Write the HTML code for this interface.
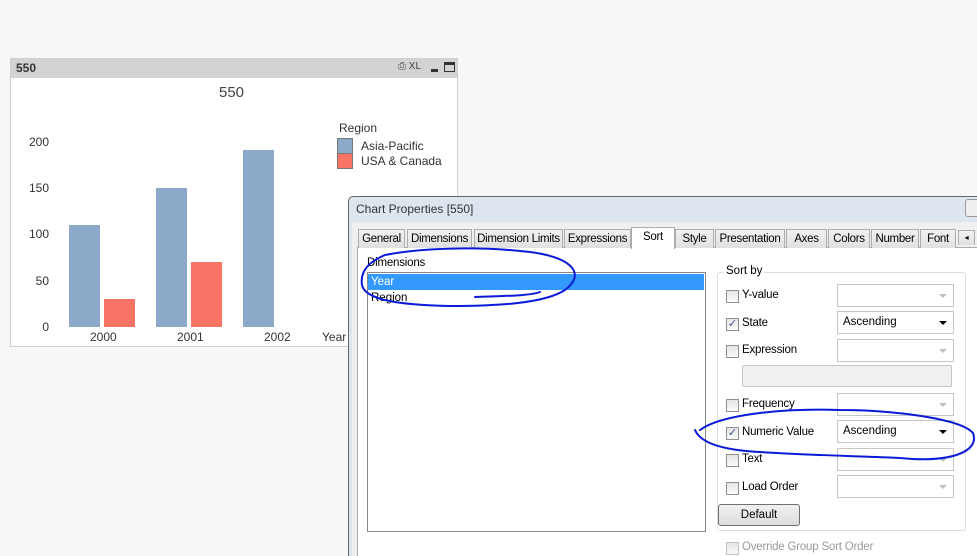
<!DOCTYPE html>
<html><head><style>
*{margin:0;padding:0;box-sizing:border-box}
html,body{width:977px;height:556px;overflow:hidden}
body{background:#f7f7f7;position:relative;font-family:"Liberation Sans",sans-serif;font-size:12px;color:#000}
.a{position:absolute;white-space:nowrap}
.tab{position:absolute;top:229px;height:19px;border:1px solid #acacac;border-bottom:none;background:linear-gradient(#f2f2f2,#e0e0e0);font-size:11.5px;letter-spacing:-0.3px;line-height:18px;text-align:center;white-space:nowrap;overflow:hidden}
.cb{position:absolute;left:726px;width:13px;height:13px;border:1px solid #8f8f8f;background:linear-gradient(#e6e6e6,#fafafa)}
.lbl{position:absolute;left:742px;font-size:11.5px;letter-spacing:-0.2px;white-space:nowrap}
.dd{position:absolute;left:837px;width:117px;height:23px;border:1px solid #c6c6c6;background:#fff;font-size:11.5px;line-height:21px;padding-left:5px}
.dd:after{content:"";position:absolute;right:6px;top:9px;border:4px solid transparent;border-top:4px solid #c0c0c0;border-bottom:none}
.dd.on:after{border-top-color:#000}
.y{position:absolute;width:30px;left:19px;text-align:right;color:#333;font-size:12px}
</style></head><body>
<!-- chart -->
<div class="a" style="left:10px;top:58px;width:448px;height:289px;background:#fff;border:1px solid #d0d0d0"></div>
<div class="a" style="left:11px;top:59px;width:446px;height:19px;background:#d3d3d3;font-weight:bold;font-size:12px;line-height:19px;padding-left:5px;color:#333">550</div>
<div class="a" style="left:398px;top:61px;font-size:10px;color:#444">⎙ XL</div>
<div class="a" style="left:431px;top:69px;width:7px;height:3px;background:#333"></div>
<div class="a" style="left:444px;top:62px;width:11px;height:10px;border:1px solid #333;border-top-width:3px"></div>
<div class="a" style="left:219px;top:84px;font-size:15px;color:#444">550</div>
<div class="y" style="top:135px">200</div>
<div class="y" style="top:181px">150</div>
<div class="y" style="top:227px">100</div>
<div class="y" style="top:274px">50</div>
<div class="y" style="top:320px">0</div>
<div class="a" style="left:69px;top:225px;width:31px;height:102px;background:#8ca9c9"></div>
<div class="a" style="left:104px;top:299px;width:31px;height:28px;background:#fa7465"></div>
<div class="a" style="left:156px;top:188px;width:31px;height:139px;background:#8ca9c9"></div>
<div class="a" style="left:191px;top:262px;width:31px;height:65px;background:#fa7465"></div>
<div class="a" style="left:243px;top:150px;width:31px;height:177px;background:#8ca9c9"></div>
<div class="a" style="left:90px;top:330px;color:#333">2000</div>
<div class="a" style="left:177px;top:330px;color:#333">2001</div>
<div class="a" style="left:264px;top:330px;color:#333">2002</div>
<div class="a" style="left:322px;top:330px;color:#333">Year</div>
<div class="a" style="left:339px;top:121px;color:#333">Region</div>
<div class="a" style="left:337px;top:138px;width:16px;height:16px;background:#8ca9c9;border:1px solid #777"></div>
<div class="a" style="left:337px;top:153px;width:16px;height:16px;background:#fa7465;border:1px solid #777"></div>
<div class="a" style="left:361px;top:139px;color:#333">Asia-Pacific</div>
<div class="a" style="left:361px;top:154px;color:#333">USA &amp; Canada</div>
<!-- dialog -->
<div class="a" style="left:348px;top:196px;width:640px;height:380px;background:#dde6ef;border:1px solid #666;border-radius:5px 5px 0 0"></div>
<div class="a" style="left:356px;top:202px;font-size:12px;color:#333">Chart Properties [550]</div>
<div class="a" style="left:965px;top:199px;width:20px;height:18px;border:1px solid #999;border-radius:3px;background:#eee"></div>
<div class="a" style="left:352px;top:222px;width:630px;height:360px;background:#f0f0f0"></div>
<div class="a" style="left:357px;top:247px;width:625px;height:330px;background:#fff;border:1px solid #acacac"></div>
<div class="tab" style="left:358px;width:47px">General</div>
<div class="tab" style="left:407px;width:65px">Dimensions</div>
<div class="tab" style="left:474px;width:89px">Dimension Limits</div>
<div class="tab" style="left:564px;width:67px">Expressions</div>
<div class="tab" style="left:631px;top:227px;width:44px;height:22px;background:#fff;line-height:18px">Sort</div>
<div class="tab" style="left:675px;width:39px">Style</div>
<div class="tab" style="left:715px;width:70px">Presentation</div>
<div class="tab" style="left:786px;width:41px">Axes</div>
<div class="tab" style="left:828px;width:42px">Colors</div>
<div class="tab" style="left:871px;width:48px">Number</div>
<div class="tab" style="left:920px;width:36px">Font</div>
<div class="tab" style="left:958px;top:230px;width:17px;height:15px;font-size:8px;line-height:13px">◂</div>
<div class="a" style="left:367px;top:257px;font-size:11.5px;letter-spacing:-0.2px">Dimensions</div>
<div class="a" style="left:367px;top:272px;width:339px;height:260px;border:1px solid #828790;background:#fff"></div>
<div class="a" style="left:368px;top:274px;width:336px;height:16px;background:#3399ff;color:#fff;padding-left:3px;line-height:16px;font-size:11.5px">Year</div>
<div class="a" style="left:371px;top:292px;font-size:11.5px">Region</div>
<div class="a" style="left:717px;top:272px;width:249px;height:259px;border:1px solid #d5dfe5;border-radius:3px"></div>
<div class="a" style="left:724px;top:265px;background:#fff;padding:0 2px;font-size:11.5px">Sort by</div>
<div class="cb" style="top:290px"></div><div class="lbl" style="top:289px">Y-value</div><div class="dd" style="top:284px"></div>
<div class="cb" style="top:318px;color:#3a4f8a;font-size:11px;line-height:11px;text-align:center">✓</div><div class="lbl" style="top:317px">State</div><div class="dd on" style="top:311px">Ascending</div>
<div class="cb" style="top:345px"></div><div class="lbl" style="top:344px">Expression</div><div class="dd" style="top:339px"></div>
<div class="a" style="left:742px;top:365px;width:210px;height:22px;border:1px solid #c6c6c6;background:#f0f0f0;border-radius:2px"></div>
<div class="cb" style="top:399px"></div><div class="lbl" style="top:398px">Frequency</div><div class="dd" style="top:393px"></div>
<div class="cb" style="top:427px;color:#3a4f8a;font-size:11px;line-height:11px;text-align:center">✓</div><div class="lbl" style="top:426px">Numeric Value</div><div class="dd on" style="top:420px">Ascending</div>
<div class="cb" style="top:454px"></div><div class="lbl" style="top:453px">Text</div><div class="dd" style="top:448px"></div>
<div class="cb" style="top:482px"></div><div class="lbl" style="top:481px">Load Order</div><div class="dd" style="top:475px"></div>
<div class="a" style="left:718px;top:504px;width:82px;height:22px;border:1px solid #707070;border-radius:3px;background:linear-gradient(#f2f2f2,#dcdcdc);text-align:center;line-height:20px;font-size:11.5px">Default</div>
<div class="cb" style="top:542px;border-color:#c0c0c0"></div><div class="lbl" style="top:541px;color:#999">Override Group Sort Order</div>
<svg class="a" style="left:0;top:0" width="977" height="556">
<g fill="none" stroke="#0a1ad8" stroke-width="2" stroke-linecap="round">
<path d="M385,255 C420,248 480,246 530,252 C575,258 585,275 565,290 C545,303 500,306 450,306 C400,305 365,300 362,285 C360,272 368,262 385,255"/>
<path d="M475,297 C500,296 530,296 540,292"/>
<path d="M700,430 C720,415 780,408 840,410 C890,410 960,418 973,433 C980,452 950,463 900,458 C860,456 800,455 760,452 C720,450 700,442 695,430"/>
</g></svg>
</body></html>
